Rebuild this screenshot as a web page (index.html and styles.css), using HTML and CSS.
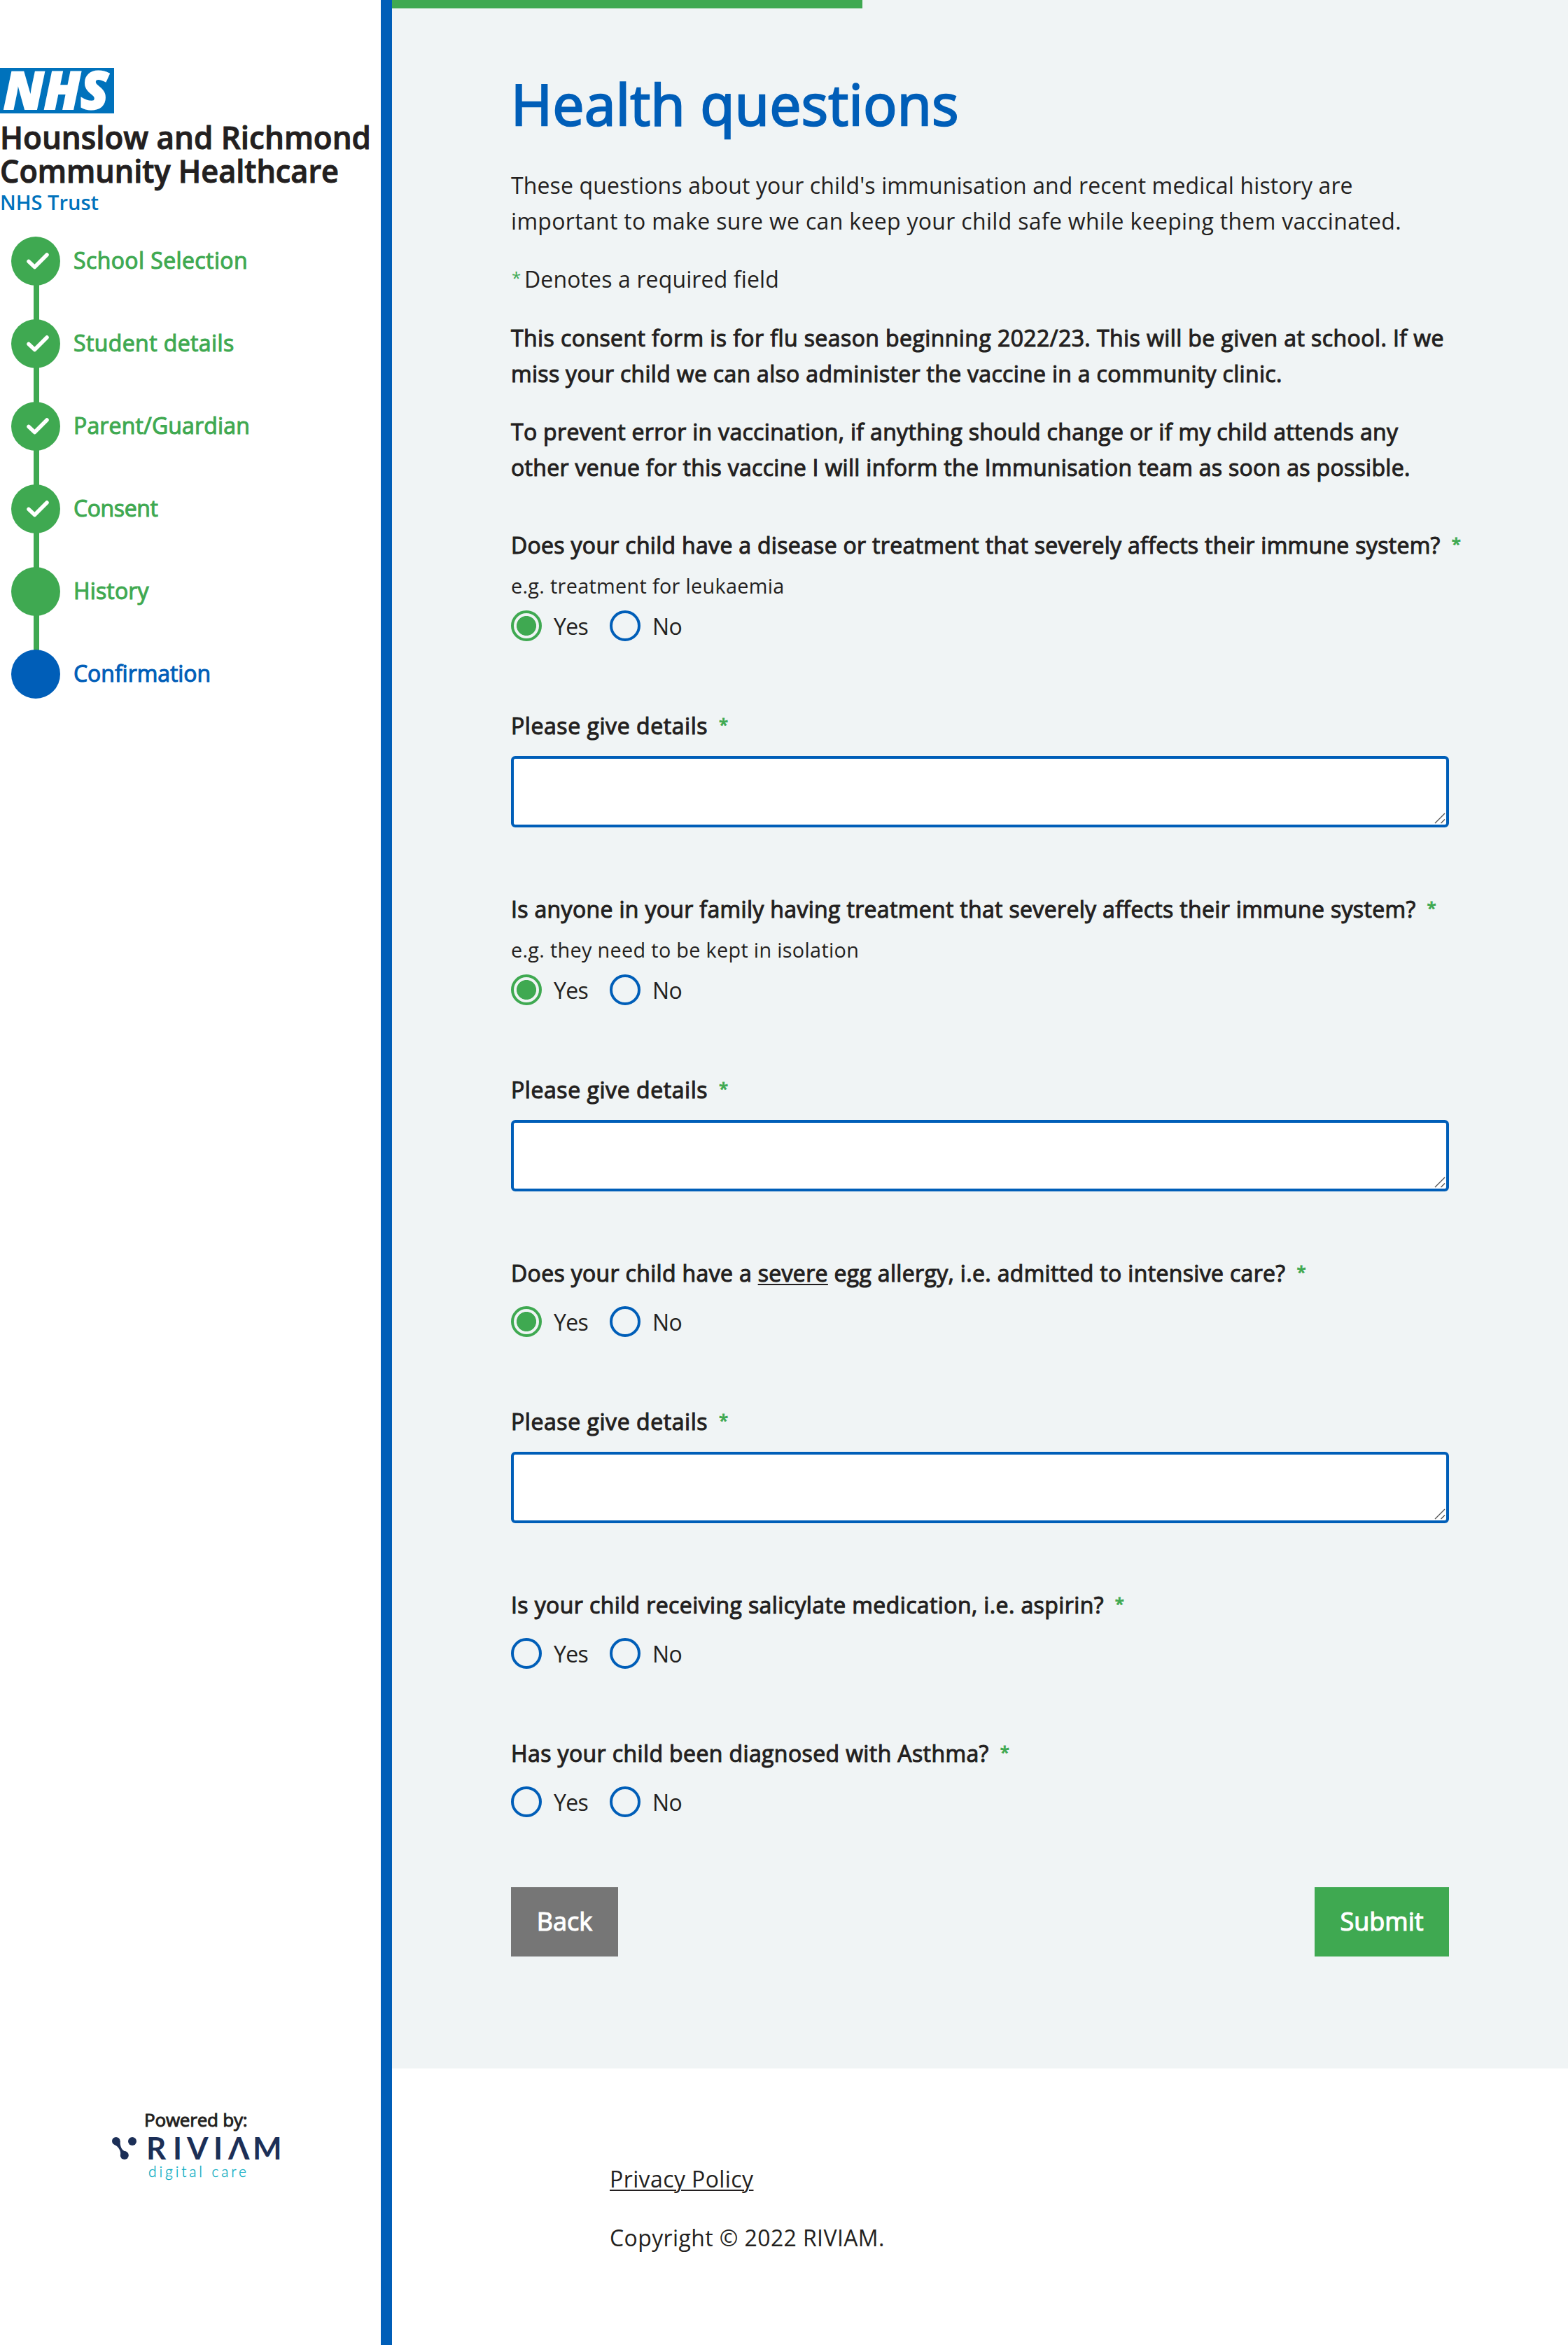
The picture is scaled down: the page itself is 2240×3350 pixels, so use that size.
FILE: index.html
```html
<!DOCTYPE html>
<html lang="en">
<head>
<meta charset="utf-8">
<title>Health questions</title>
<link rel="stylesheet" href="styles.css">
</head>
<body>
<div class="page">
  <aside class="sidebar">
    <svg class="trust-logo" width="540" height="222" viewBox="0 0 540 222" role="img" aria-label="Hounslow and Richmond Community Healthcare NHS Trust">
      <rect x="0" y="1" width="163" height="65" fill="#0072bc"/>
      <text class="nhs" x="5" y="60" textLength="150" lengthAdjust="spacingAndGlyphs">NHS</text>
      <text class="trust-name" x="0" y="117" textLength="530" lengthAdjust="spacingAndGlyphs">Hounslow and Richmond</text>
      <text class="trust-name" x="0" y="165" textLength="484" lengthAdjust="spacingAndGlyphs">Community Healthcare</text>
      <text class="trust-type" x="0" y="204" textLength="141" lengthAdjust="spacingAndGlyphs">NHS Trust</text>
    </svg>
    <ol class="steps">
      <li class="step step-wide"><span class="dot"><svg width="70" height="70" viewBox="0 0 70 70"><path d="M25 35.500L33.500 43.500L51 26"/></svg></span><span class="step-name">School Selection</span></li>
      <li class="step step-wide"><span class="dot"><svg width="70" height="70" viewBox="0 0 70 70"><path d="M25 35.500L33.500 43.500L51 26"/></svg></span><span class="step-name">Student details</span></li>
      <li class="step"><span class="dot"><svg width="70" height="70" viewBox="0 0 70 70"><path d="M25 35.500L33.500 43.500L51 26"/></svg></span><span class="step-name">Parent/Guardian</span></li>
      <li class="step step-tight"><span class="dot"><svg width="70" height="70" viewBox="0 0 70 70"><path d="M25 35.500L33.500 43.500L51 26"/></svg></span><span class="step-name">Consent</span></li>
      <li class="step"><span class="dot"></span><span class="step-name">History</span></li>
      <li class="step step-next"><span class="dot"></span><span class="step-name">Confirmation</span></li>
    </ol>
    <div class="powered">
      <span class="powered-text">Powered by:</span>
      <svg class="riviam" width="250" height="76" viewBox="0 0 250 76" role="img" aria-label="RIVIAM digital care">
        <g fill="#1c2f57">
          <circle cx="5.800" cy="12.700" r="5.800"/>
          <circle cx="29" cy="13" r="6"/>
          <circle cx="17.800" cy="33" r="6"/>
          <path d="M11.500 12Q11.500 22 15.500 25.500Q18 27.500 21 28.200L12.500 35.500Q12.500 28 10.500 24.500Q8 19.500 3.500 18Z"/>
        </g>
        <text class="riviam-name" y="38.500" x="49 87 107 145 166 201">RIVIΛM</text>
        <text class="riviam-sub" x="52" y="63.500" textLength="140">digital care</text>
      </svg>
    </div>
  </aside>
  <div class="content">
    <main class="main">
      <div class="progress"><div class="progress-value" style="width: 40%"></div></div>
      <form class="form">
        <h1 class="title">Health questions</h1>
        <p class="text"><span class="line track-s">These questions about your child's immunisation and recent medical history are</span><span class="line">important to make sure we can keep your child safe while keeping them vaccinated.</span></p>
        <p class="text"><span class="star">*</span><span class="line-rest track-s">Denotes a required field</span></p>
        <p class="text strong"><span class="line track-l">This consent form is for flu season beginning 2022/23. This will be given at school. If we</span><span class="line">miss your child we can also administer the vaccine in a community clinic.</span></p>
        <p class="text strong"><span class="line">To prevent error in vaccination, if anything should change or if my child attends any</span><span class="line">other venue for this vaccine I will inform the Immunisation team as soon as possible.</span></p>

        <div class="question first">
          <div class="label track-m">Does your child have a disease or treatment that severely affects their immune system?<span class="star">*</span></div>
          <div class="hint">e.g. treatment for leukaemia</div>
          <div class="options"><label class="option"><input class="radio" type="radio" name="q1" checked>Yes</label><label class="option"><input class="radio" type="radio" name="q1">No</label></div>
        </div>
        <div class="details">
          <div class="label label-details">Please give details<span class="star">*</span></div>
          <div class="area-wrap"><textarea class="area" aria-label="Details"></textarea><svg class="grip" width="16" height="16" viewBox="0 0 16 16"><path d="M1 15L15 1M9.500 15L15 9.500"/></svg></div>
        </div>

        <div class="question">
          <div class="label">Is anyone in your family having treatment that severely affects their immune system?<span class="star">*</span></div>
          <div class="hint">e.g. they need to be kept in isolation</div>
          <div class="options"><label class="option"><input class="radio" type="radio" name="q2" checked>Yes</label><label class="option"><input class="radio" type="radio" name="q2">No</label></div>
        </div>
        <div class="details">
          <div class="label label-details">Please give details<span class="star">*</span></div>
          <div class="area-wrap"><textarea class="area" aria-label="Details"></textarea><svg class="grip" width="16" height="16" viewBox="0 0 16 16"><path d="M1 15L15 1M9.500 15L15 9.500"/></svg></div>
        </div>

        <div class="question no-hint">
          <div class="label">Does your child have a <u class="underlined">severe</u> egg allergy, i.e. admitted to intensive care?<span class="star">*</span></div>
          <div class="options"><label class="option"><input class="radio" type="radio" name="q3" checked>Yes</label><label class="option"><input class="radio" type="radio" name="q3">No</label></div>
        </div>
        <div class="details">
          <div class="label label-details">Please give details<span class="star">*</span></div>
          <div class="area-wrap"><textarea class="area" aria-label="Details"></textarea><svg class="grip" width="16" height="16" viewBox="0 0 16 16"><path d="M1 15L15 1M9.500 15L15 9.500"/></svg></div>
        </div>

        <div class="question no-hint">
          <div class="label track-l">Is your child receiving salicylate medication, i.e. aspirin?<span class="star">*</span></div>
          <div class="options"><label class="option"><input class="radio" type="radio" name="q4">Yes</label><label class="option"><input class="radio" type="radio" name="q4">No</label></div>
        </div>
        <div class="question no-hint after-question">
          <div class="label track-l">Has your child been diagnosed with Asthma?<span class="star">*</span></div>
          <div class="options"><label class="option"><input class="radio" type="radio" name="q5">Yes</label><label class="option"><input class="radio" type="radio" name="q5">No</label></div>
        </div>

        <div class="actions">
          <button class="button back" type="button">Back</button>
          <button class="button submit" type="button">Submit</button>
        </div>
      </form>
    </main>
    <footer class="footer">
      <a class="privacy" href="#">Privacy Policy</a>
      <div class="copyright">Copyright © 2022 RIVIAM.</div>
    </footer>
  </div>
</div>
</body>
</html>
```
FILE: styles.css
```css
* { box-sizing: border-box; }

body {
  margin: 0;
  background: #fff;
  color: #231f20;
  font: 32px/51.2px "Open Sans", "Noto Sans", sans-serif;
}

.page { display: flex; width: 2240px; height: 3350px; overflow: hidden; }

/* Sidebar */
.sidebar {
  display: flex;
  flex-direction: column;
  flex: none;
  width: 560px;
  padding: 96px 0 218px;
  border-right: 16px solid #005eb8;
}
.trust-logo, .riviam { display: block; flex: none; overflow: visible; }
.nhs { font: italic 800 74px "Open Sans", sans-serif; fill: #fff; stroke: #fff; stroke-width: 2px; }
.trust-name { font: 600 45px "Open Sans", sans-serif; fill: #231f20; stroke: #231f20; stroke-width: 1px; }
.trust-type { font: 600 29.500px "Open Sans", sans-serif; fill: #0072bc; }

.steps { margin: 20px 0 auto; padding: 0 0 0 16px; list-style: none; }
.step {
  display: flex;
  position: relative;
  gap: 19px;
  height: 118px;
  color: #3fa951;
  letter-spacing: .15px;
  -webkit-text-stroke: 1.050px;
}
.step:not(:last-child)::after {
  content: "";
  position: absolute;
  left: 32px;
  top: 68px;
  width: 8px;
  height: 52px;
  background: #3fa951;
}
.dot { flex: none; width: 70px; height: 70px; border-radius: 50%; background: currentColor; }
.dot svg { display: block; fill: none; stroke: #fff; stroke-width: 5.500px; stroke-linecap: round; stroke-linejoin: round; }
.step-name { line-height: 68px; white-space: nowrap; }
.step-wide { letter-spacing: .4px; }
.step-tight { letter-spacing: -.4px; }
.step-next { color: #005eb8; letter-spacing: -.05px; }

.powered { display: flex; flex-direction: column; height: 122px; padding-left: 160px; }
.powered-text { padding-left: 46px; font-size: 26px; line-height: 36px; letter-spacing: -.2px; -webkit-text-stroke: .950px; }
.riviam-name { font: 700 44px Lato, "Open Sans", sans-serif; fill: #1c2f57; }
.riviam-sub { font: 300 21px Lato, sans-serif; fill: #00a9c0; stroke: #00a9c0; stroke-width: .3px; }

/* Main column */
.content { flex: 1; display: flex; flex-direction: column; }
.main { background: #f0f4f5; height: 2955px; }
.progress { height: 12px; }
.progress-value { height: 12px; background: #3fa951; }
.form { width: 1510px; padding-left: 170px; white-space: nowrap; }

.title {
  margin: 88px 0 43px;
  color: #005eb8;
  font-size: 80px;
  font-weight: 400;
  line-height: 96px;
  letter-spacing: .500px;
  -webkit-text-stroke: 2.500px;
}
.text { margin: 0 0 32px; letter-spacing: .31px; }
.line { display: block; }
.track-s { letter-spacing: .13px; }
.track-l { letter-spacing: .42px; }
.strong, .label { -webkit-text-stroke: 1.050px; }
.text .star { margin: 0 5px 0 1px; }
.star {
  display: inline-block;
  width: 13px;
  margin-left: 16px;
  color: #3fa951;
  font-size: 24px;
  line-height: 0;
  letter-spacing: 0;
  vertical-align: 5px;
}

.question { margin-top: 90px; }
.first { margin-top: 59px; }
.after-question, .details { margin-top: 94px; }
.label { height: 52px; padding-top: 1px; line-height: 52px; letter-spacing: .33px; }
.label.track-m { letter-spacing: .3px; }
.label.track-l { letter-spacing: .39px; }
.label-details { letter-spacing: .56px; }
.underlined { text-decoration-thickness: 2px; text-underline-offset: 3px; }
.hint { margin-top: 11px; font-size: 28.800px; line-height: 44px; letter-spacing: .32px; }
.options { display: flex; height: 44px; margin-top: 13px; line-height: 46px; }
.no-hint .options { margin-top: 22px; }
.option { display: flex; gap: 17px; width: 141px; letter-spacing: -.7px; }
.radio {
  appearance: none;
  flex: none;
  width: 44px;
  height: 44px;
  margin: 0;
  border: 4px solid #005eb8;
  border-radius: 50%;
}
.radio:checked { border-color: #3fa951; background: radial-gradient(circle, #3fa951 13.600px, transparent 14.400px); }

.area-wrap { position: relative; height: 102px; margin-top: 18px; }
.area {
  display: block;
  width: 1340px;
  height: 102px;
  border: 4px solid #005eb8;
  border-radius: 6px;
  background: #fff;
  resize: none;
}
.grip { position: absolute; right: 5px; bottom: 5px; fill: none; stroke: #555; stroke-width: 1.400px; }

.actions { display: flex; justify-content: space-between; margin-top: 100px; }
.button {
  width: 153px;
  height: 99px;
  padding: 0 0 2px;
  border: 0;
  color: #fff;
  background: #767676;
  font: 36px "Open Sans", sans-serif;
  -webkit-text-stroke: 1.150px;
}
.submit { width: 192px; background: #3fa951; }

.footer { display: flex; flex-direction: column; align-items: flex-start; gap: 33px; padding: 132px 0 0 311px; }
.privacy { color: inherit; letter-spacing: .4px; text-decoration-thickness: 2px; text-underline-offset: 3px; }
.copyright { letter-spacing: .39px; }
```
